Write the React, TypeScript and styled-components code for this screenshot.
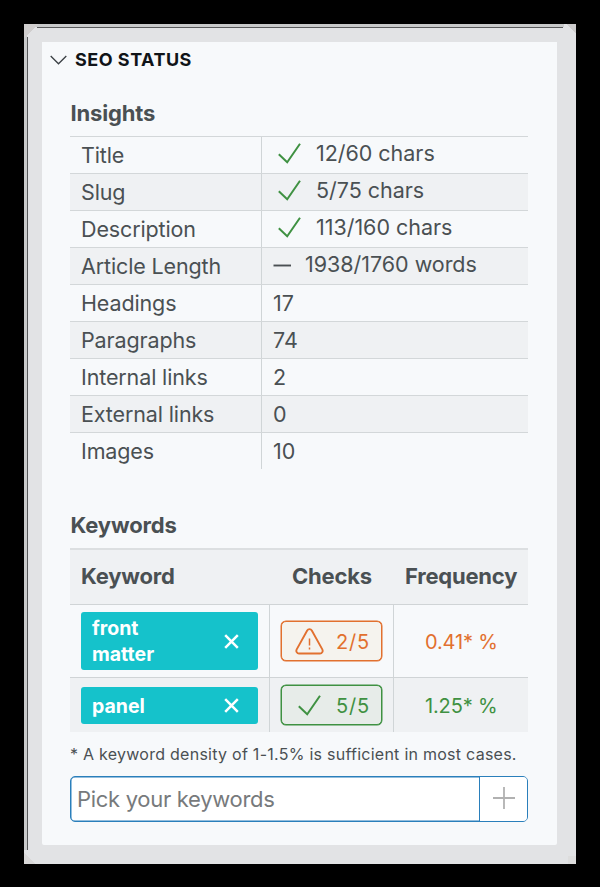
import React from "react";
import styled, { createGlobalStyle } from "styled-components";

const GlobalStyle = createGlobalStyle`
  * { box-sizing: border-box; }
  body {
    margin: 0;
    background: #000;
    font-family: Inter, "Liberation Sans", sans-serif;
    font-weight: 425;
    color: #4a5053;
  }
`;

const Desktop = styled.main`
  height: 887px;
  padding: 24px 24px 23px;
  background: #000;
`;

const WindowFrame = styled.div`
  height: 840px;
  padding: 18px 19px 19px 18px;
  background:
    linear-gradient(#58595b, #58595b) 13px 3px / 526px 1px no-repeat,
    linear-gradient(#58595b, #58595b) 3px 13px / 1px 813px no-repeat,
    linear-gradient(135deg, #d0cece 0 10px, transparent 10px) 0 0 / 16px 16px no-repeat,
    linear-gradient(225deg, #cdcccc 0 7px, transparent 7px) 100% 0 / 16px 16px no-repeat,
    linear-gradient(#c9cacb, #c9cacb) 0 0 / 540px 3px no-repeat,
    linear-gradient(#c9cacb, #c9cacb) 0 0 / 3px 826px no-repeat,
    linear-gradient(45deg, #d9d8d8 0 8px, transparent 8px) 0 100% / 16px 16px no-repeat,
    linear-gradient(#dddddd, #dddddd) 100% 100% / 8px 8px no-repeat,
    #e2e3e5;
`;

const Panel = styled.section`
  height: 803px;
  padding: 0 29px 0 28px;
  background: #f7f9fb;
  border-radius: 0 0 2px 2px;
`;

const PanelHeader = styled.header`
  display: flex;
  align-items: center;
  gap: 8px;
  height: 36px;
  margin-left: -20px;
`;

const PanelTitle = styled.h1`
  margin: 0;
  font-size: 18px;
  line-height: 24px;
  font-weight: 700;
  letter-spacing: 0.5px;
  color: #101418;
`;

const SectionTitle = styled.h2<{ $top: number; $gap: number }>`
  margin: ${(p) => p.$top}px 0 ${(p) => p.$gap}px;
  padding-left: 0.5px;
  font-size: 22px;
  line-height: 28px;
  font-weight: 700;
  letter-spacing: -0.15px;
  white-space: nowrap;
`;

const InsightList = styled.div``;

const InsightRow = styled.div`
  display: grid;
  grid-template-columns: 191px 1fr;
  height: 37px;
  border-top: 1px solid #d3d7d9;
  &:nth-child(even) { background: #eff1f3; }
`;

const InsightLabel = styled.div`
  padding-left: 11px;
  font-size: 21.5px;
  line-height: 36px;
  letter-spacing: -0.13px;
  white-space: nowrap;
`;

const InsightValue = styled.div<{ $status?: string }>`
  display: flex;
  align-items: center;
  gap: ${(p) => (p.$status === "ok" ? 15 : 13)}px;
  padding-left: ${(p) => (p.$status === "ok" ? 16 : 11)}px;
  padding-bottom: ${(p) => (p.$status ? 3 : 0)}px;
  border-left: 1px solid #d0d5d7;
  font-size: 21.5px;
  line-height: 33px;
  letter-spacing: -0.03px;
  white-space: nowrap;
`;

const KeywordGrid = styled.div`
  border-top: 2px solid #dcdfe1;
`;

const KeywordRow = styled.div<{ $height: number; $shaded?: boolean; $head?: boolean }>`
  display: grid;
  grid-template-columns: 199px 124px 1fr;
  height: ${(p) => p.$height}px;
  border-top: ${(p) => (p.$head ? "none" : "1px solid #d0d4d6")};
  background: ${(p) => (p.$shaded ? "#eff1f3" : "transparent")};
`;

const HeadCell = styled.div<{ $left: number }>`
  padding-left: ${(p) => p.$left}px;
  font-size: 22px;
  line-height: 52px;
  font-weight: 700;
  letter-spacing: -0.22px;
  white-space: nowrap;
`;

const Cell = styled.div<{ $divided?: boolean }>`
  display: flex;
  align-items: center;
  padding-left: 11px;
  border-left: ${(p) => (p.$divided ? "1px solid #d0d5d7" : "none")};
`;

const Tag = styled.div<{ $height: number }>`
  display: flex;
  align-items: center;
  justify-content: space-between;
  width: 177px;
  height: ${(p) => p.$height}px;
  padding: 0 19px 0 11px;
  border-radius: 3px;
  background: #15c2cb;
  color: #fff;
  font-size: 19.5px;
  line-height: 26px;
  font-weight: 700;
`;

const TagName = styled.span<{ $nudge: number }>`
  width: 90px;
  padding-top: ${(p) => p.$nudge}px;
`;

const tones = {
  warn: { color: "#e2702f", fill: "#f5f3ee" },
  ok: { color: "#3f9142", fill: "#e7ece9" },
};

type Tone = keyof typeof tones;

const Badge = styled.div<{ $tone: Tone }>`
  display: flex;
  align-items: center;
  justify-content: space-between;
  width: 101px;
  height: 40px;
  padding: 1px 11px 0 ${(p) => (p.$tone === "ok" ? 16 : 13)}px;
  border: 1px solid ${(p) => tones[p.$tone].color};
  border-radius: 5px;
  background: ${(p) => tones[p.$tone].fill};
  box-shadow: 0 0 0 0.5px ${(p) => tones[p.$tone].color};
  color: ${(p) => tones[p.$tone].color};
  font-size: 20px;
  letter-spacing: 0.8px;
`;

const Frequency = styled.span<{ $tone: Tone }>`
  padding: 1px 0 0 20px;
  font-size: 20px;
  letter-spacing: -0.15px;
  white-space: nowrap;
  color: ${(p) => tones[p.$tone].color};
`;

const Note = styled.p`
  margin: 11px 0 10px;
  font-size: 16px;
  line-height: 23px;
  letter-spacing: 0.26px;
  white-space: nowrap;
`;

const Picker = styled.div`
  display: flex;
  height: 46px;
  overflow: hidden;
  border: 1px solid #2a7fbb;
  border-radius: 5px;
  background: #fff;
  box-shadow: inset 0 0 0 0.5px #2a7fbb;
`;

const PickerInput = styled.input`
  flex: 1;
  min-width: 0;
  padding: 0 6px;
  border: 0;
  outline: 0;
  background: transparent;
  font: 425 22px Inter, "Liberation Sans", sans-serif;
  letter-spacing: -0.3px;
  &::placeholder { color: #777a7c; opacity: 1; }
`;

const AddButton = styled.button`
  display: flex;
  align-items: center;
  justify-content: center;
  width: 48px;
  padding: 0 0 2px;
  border: 0;
  border-left: 1px solid #2a7fbb;
  background: #fff;
`;

const Chevron = () => (
  <svg width="17" height="10" viewBox="0 0 17 10" fill="none" stroke="#3b4045" strokeWidth="1.3">
    <path d="M.7 1 8.5 8.8 16.3 1" />
  </svg>
);

const Check = () => (
  <svg width="23" height="21" viewBox="0 0 23 21" fill="none" stroke="#3f9142" strokeWidth="2">
    <path d="M.8 11.2 9.2 19.2 22 .8" />
  </svg>
);

const Dash = () => (
  <svg width="19" height="4" viewBox="0 0 19 4" stroke="#4a5053" strokeWidth="1.9">
    <path d="M.5 2.5h17.5" />
  </svg>
);

const Warning = () => (
  <svg width="29" height="28" viewBox="0 0 29 28" fill="none" stroke="#e2702f" strokeWidth="1.9">
    <path d="M12.2 2.5c1-1.8 3.6-1.8 4.6 0l10.5 18.9c1 1.8-.2 4.1-2.3 4.1H4c-2.1 0-3.3-2.3-2.3-4.1Z" />
    <path d="M14.5 10.5v7M14.5 19.5v2" strokeWidth="1.5" />
  </svg>
);

const Cross = () => (
  <svg width="15" height="15" viewBox="0 0 15 15" stroke="#fff" strokeWidth="2.5">
    <path d="m1.2 1.2 12.6 12.6m0-12.6L1.2 13.8" />
  </svg>
);

const Plus = () => (
  <svg width="22" height="22" viewBox="0 0 22 22" stroke="#b1b1b1" strokeWidth="1.8">
    <path d="M11 0v22M0 11h22" />
  </svg>
);

const insights: { label: string; value: string; status?: "ok" | "neutral" }[] = [
  { label: "Title", value: "12/60 chars", status: "ok" },
  { label: "Slug", value: "5/75 chars", status: "ok" },
  { label: "Description", value: "113/160 chars", status: "ok" },
  { label: "Article Length", value: "1938/1760 words", status: "neutral" },
  { label: "Headings", value: "17" },
  { label: "Paragraphs", value: "74" },
  { label: "Internal links", value: "2" },
  { label: "External links", value: "0" },
  { label: "Images", value: "10" },
];

const keywords: { name: string; checks: string; freq: string; tone: Tone; row: number; tag: number; nudge: number }[] = [
  { name: "front matter", checks: "2/5", freq: "0.41* %", tone: "warn", row: 73, tag: 58, nudge: 0 },
  { name: "panel", checks: "5/5", freq: "1.25* %", tone: "ok", row: 55, tag: 37, nudge: 1 },
];

export default function App() {
  return (
    <Desktop>
      <GlobalStyle />
      <WindowFrame>
        <Panel>
          <PanelHeader>
            <Chevron />
            <PanelTitle>SEO STATUS</PanelTitle>
          </PanelHeader>
          <SectionTitle $top={21} $gap={9}>Insights</SectionTitle>
          <InsightList>
            {insights.map((item) => (
              <InsightRow key={item.label}>
                <InsightLabel>{item.label}</InsightLabel>
                <InsightValue $status={item.status}>
                  {item.status === "ok" && <Check />}
                  {item.status === "neutral" && <Dash />}
                  <span>{item.value}</span>
                </InsightValue>
              </InsightRow>
            ))}
          </InsightList>
          <SectionTitle $top={42} $gap={9}>Keywords</SectionTitle>
          <KeywordGrid>
            <KeywordRow $height={54} $shaded $head>
              <HeadCell $left={11}>Keyword</HeadCell>
              <HeadCell $left={23}>Checks</HeadCell>
              <HeadCell $left={12}>Frequency</HeadCell>
            </KeywordRow>
            {keywords.map((k, i) => (
              <KeywordRow key={k.name} $height={k.row} $shaded={i % 2 === 1}>
                <Cell>
                  <Tag $height={k.tag}>
                    <TagName $nudge={k.nudge}>{k.name}</TagName>
                    <Cross />
                  </Tag>
                </Cell>
                <Cell $divided>
                  <Badge $tone={k.tone}>
                    {k.tone === "warn" ? <Warning /> : <Check />}
                    <span>{k.checks}</span>
                  </Badge>
                </Cell>
                <Cell $divided>
                  <Frequency $tone={k.tone}>{k.freq}</Frequency>
                </Cell>
              </KeywordRow>
            ))}
          </KeywordGrid>
          <Note>* A keyword density of 1-1.5% is sufficient in most cases.</Note>
          <Picker>
            <PickerInput placeholder="Pick your keywords" />
            <AddButton aria-label="Add keyword">
              <Plus />
            </AddButton>
          </Picker>
        </Panel>
      </WindowFrame>
    </Desktop>
  );
}
